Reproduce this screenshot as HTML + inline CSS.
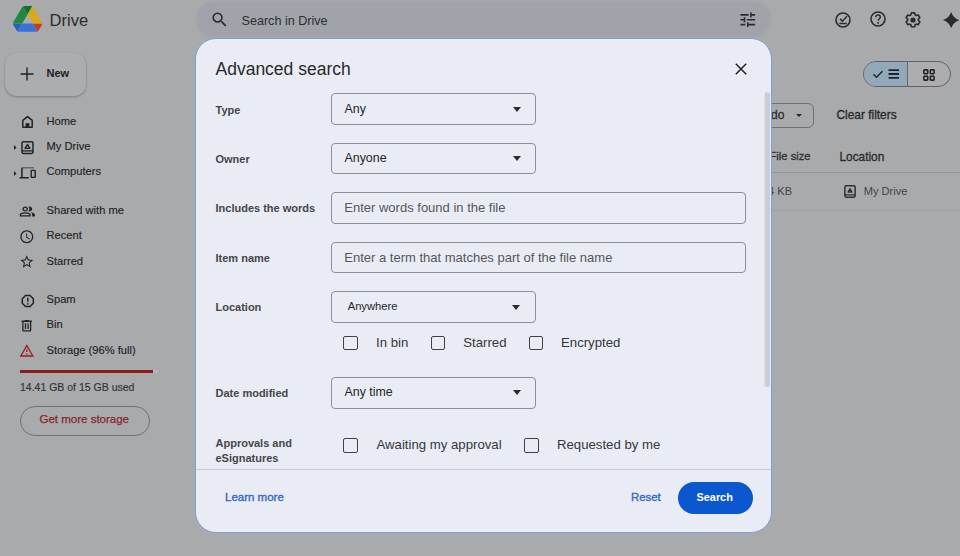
<!DOCTYPE html>
<html><head><meta charset="utf-8">
<style>
*{box-sizing:border-box;margin:0;padding:0}
html,body{width:960px;height:556px;overflow:hidden;background:#a9aaac;font-family:"Liberation Sans",sans-serif;color:#232426}
.a{position:absolute;white-space:nowrap}
.ico{position:absolute}
.side{font-size:11.15px;color:#232426;-webkit-text-stroke:.15px #232426}
#search{left:195.5px;top:1px;width:575px;height:36px;border-radius:18px;background:#a0a3a9;filter:blur(1.2px)}
#dlg{left:195px;top:38.3px;width:577px;height:495.2px;border-radius:21px;background:#e9ecf4;border:1px solid #7d9fd6;overflow:hidden}
.lbl{font-size:11px;font-weight:bold;color:#45464a}
.box{position:absolute;border:1px solid #8c8f94;border-radius:4px}
.val{font-size:12.4px;color:#242527}
.ph{font-size:13px;color:#55575b}
.cb{position:absolute;width:14.5px;height:14.5px;border:1.8px solid #404246;border-radius:2px}
.cbl{font-size:13.2px;color:#36373a}
.arr{position:absolute;width:0;height:0;border-left:4px solid transparent;border-right:4px solid transparent;border-top:5px solid #2a2b2e}
</style></head><body>

<!-- Header -->
<svg class="ico" style="left:12.5px;top:6.2px" width="29.2" height="25.8" viewBox="0 0 87.3 78" preserveAspectRatio="none">
<path d="m6.6 66.85 3.850 6.65c.8 1.4 1.95 2.5 3.3 3.3l13.75-23.8h-27.5c0 1.55.4 3.1 1.2 4.5z" fill="#2c5dbf"/>
<path d="m43.65 25-13.75-23.8c-1.35.8-2.5 1.9-3.3 3.3l-25.4 44a9.06 9.06 0 0 0 -1.2 4.5h27.5z" fill="#1f8a3f"/>
<path d="m73.55 76.8c1.35-.8 2.5-1.9 3.3-3.3l1.6-2.75 7.65-13.250c.8-1.4 1.2-2.95 1.2-4.5h-27.502l5.852 11.5z" fill="#c73a2c"/>
<path d="m43.65 25 13.75-23.8c-1.35-.8-2.9-1.2-4.5-1.2h-18.5c-1.6 0-3.15.45-4.5 1.2z" fill="#176b37"/>
<path d="m59.8 53h-32.3l-13.75 23.8c1.35.8 2.9 1.2 4.5 1.2h50.8c1.6 0 3.15-.45 4.5-1.2z" fill="#3a73d6"/>
<path d="m73.4 26.5-12.7-22c-.8-1.4-1.95-2.5-3.3-3.3l-13.75 23.8 16.15 28h27.45c0-1.55-.4-3.1-1.2-4.5z" fill="#d9a81c"/>
</svg>
<div class="a" style="left:49.5px;top:10.5px;font-size:16.6px;color:#2b2c2e">Drive</div>

<div id="search" class="a"></div>
<svg class="ico" style="left:209.6px;top:9.7px" width="19.2" height="19.2" viewBox="0 0 24 24"><path d="M15.5 14h-.79l-.28-.27A6.471 6.471 0 0 0 16 9.5 6.5 6.5 0 1 0 9.5 16c1.61 0 3.090-.59 4.23-1.57l.27.28v.79l5 4.99L20.49 19l-4.99-5zm-6 0C7.01 14 5 11.99 5 9.5S7.01 5 9.5 5 14 7.010 14 9.5 11.99 14 9.5 14z" fill="#2a2b2e"/></svg>
<div class="a" style="left:241.5px;top:13.8px;font-size:12.6px;color:#2e2f33">Search in Drive</div>
<svg class="ico" style="left:738.2px;top:9.9px" width="19.5" height="19.5" viewBox="0 0 24 24"><path d="M3 17v2h6v-2H3zM3 5v2h10V5H3zm10 16v-2h8v-2h-8v-2h-2v6h2zM7 9v2H3v2h4v2h2V9H7zm14 4v-2H11v2h10zm-6-4h2V7h4V5h-4V3h-2v6z" fill="#2a2b2e"/></svg>

<svg class="ico" style="left:833.1px;top:9.6px" width="20" height="20" viewBox="0 0 20 20"><circle cx="10" cy="10" r="7" fill="none" stroke="#2a2b2e" stroke-width="1.6"/><path d="M6.4 13.5h7.3" stroke="#2a2b2e" stroke-width="1.5"/><path d="M7.1 8.9l2.3 2.3 4.6-4.9" fill="none" stroke="#2a2b2e" stroke-width="1.5"/></svg>
<svg class="ico" style="left:868.3px;top:9.4px" width="20" height="20" viewBox="0 0 20 20"><circle cx="10" cy="10" r="7" fill="none" stroke="#2a2b2e" stroke-width="1.6"/><path d="M7.7 8.2c0-1.4 1-2.3 2.3-2.3s2.3.9 2.3 2.2c0 1.7-2.1 1.7-2.1 3.6" fill="none" stroke="#2a2b2e" stroke-width="1.5"/><circle cx="10.1" cy="13.9" r=".95" fill="#2a2b2e"/></svg>
<svg class="ico" style="left:903.1px;top:9.7px" width="20" height="20" viewBox="0 0 20 20"><path d="M8.3 2.8h3.4l.45 1.9c.5.2.9.45 1.3.75l1.85-.6 1.7 2.95-1.45 1.3c.08.5.08 1 0 1.5l1.45 1.3-1.7 2.95-1.85-.6c-.4.3-.8.55-1.3.75l-.45 1.9H8.3l-.45-1.9c-.5-.2-.9-.45-1.3-.75l-1.85.6L3 14.8l1.45-1.3c-.08-.5-.08-1 0-1.5L3 10.7" fill="none"/><path d="M8.4 2.9h3.2l.5 2c.45.18.85.42 1.2.7l1.95-.6 1.6 2.77-1.5 1.4c.07.45.07.9 0 1.36l1.5 1.4-1.6 2.77-1.95-.6c-.35.28-.75.52-1.2.7l-.5 2H8.4l-.5-2c-.45-.18-.85-.42-1.2-.7l-1.95.6-1.6-2.770 1.5-1.4c-.07-.45-.07-.9 0-1.36l-1.5-1.4 1.6-2.77 1.95.6c.35-.28.75-.52 1.2-.7z" fill="none" stroke="#2a2b2e" stroke-width="1.6" stroke-linejoin="round"/><circle cx="10" cy="10" r="2.6" fill="#2a2b2e"/></svg>
<svg class="ico" style="left:942.8px;top:11.5px" width="16.3" height="16.2" viewBox="0 0 16 16" preserveAspectRatio="none"><path d="M8 0Q10 6 16 8Q10 10 8 16Q6 10 0 8Q6 6 8 0z" fill="#2a2b2e"/></svg>

<!-- Sidebar icons -->
<svg class="ico" style="left:20px;top:114px" width="15" height="15" viewBox="0 0 15 15"><path d="M2.8 13.3V6.4L7.5 2.7l4.7 3.7v6.9z" fill="none" stroke="#222325" stroke-width="1.5" stroke-linejoin="round"/><rect x="5.6" y="9.2" width="3.8" height="4.2" fill="#222325"/></svg>
<svg class="ico" style="left:13.5px;top:145.4px" width="3" height="5" viewBox="0 0 3 5"><path d="M0 0L2.4 2.5 0 5z" fill="#222325"/></svg>
<svg class="ico" style="left:20px;top:140px" width="15" height="15" viewBox="0 0 15 15"><rect x="2" y="1.8" width="11" height="11.6" rx="1.3" fill="none" stroke="#222325" stroke-width="1.5"/><path d="M2 10.9h11" stroke="#222325" stroke-width="1.3"/><path d="M7.5 4.4L9.9 8.4H5.1z" fill="none" stroke="#222325" stroke-width="1.4" stroke-linejoin="round"/></svg>
<svg class="ico" style="left:13.5px;top:171.2px" width="3" height="5" viewBox="0 0 3 5"><path d="M0 0L2.4 2.5 0 5z" fill="#222325"/></svg>
<svg class="ico" style="left:18.5px;top:165.2px" width="18" height="15" viewBox="0 0 18 15"><path d="M15 3.2V2.5H3.2c-.6 0-1 .4-1 1v8.4H.6v1.5H9.8v-1.5H3.7V3.2z" fill="#222325"/><rect x="12.2" y="5.4" width="4" height="7" rx=".6" fill="none" stroke="#222325" stroke-width="1.4"/></svg>
<svg class="ico" style="left:19.1px;top:203.8px" width="16.6" height="15.1" viewBox="0 0 24 24" preserveAspectRatio="none"><path d="M1 20v-2.8q0-.85.438-1.563.437-.712 1.162-1.087 1.550-.775 3.150-1.163Q7.35 13 9 13t3.25.387q1.6.388 3.150 1.163.725.375 1.162 1.087Q17 16.35 17 17.2V20Zm18 0v-3q0-1.100-.612-2.113-.613-1.012-1.738-1.737 1.275.15 2.4.512 1.125.363 2.1.888.9.5 1.375 1.112Q23 16.275 23 17v3ZM9 12q-1.65 0-2.825-1.175Q5 9.65 5 8q0-1.65 1.175-2.825Q7.35 4 9 4q1.65 0 2.825 1.175Q13 6.35 13 8q0 1.65-1.175 2.825Q10.65 12 9 12Zm10-4q0 1.65-1.175 2.825Q16.65 12 15 12q-.275 0-.7-.062-.425-.063-.7-.138.675-.8 1.037-1.775Q15 9.05 15 8q0-1.050-.363-2.025Q14.275 5 13.6 4.2q.35-.125.7-.163Q14.65 4 15 4q1.65 0 2.825 1.175Q19 6.35 19 8ZM3 18h12v-.8q0-.275-.137-.5-.138-.225-.363-.35-1.350-.675-2.725-1.013Q10.4 15 9 15t-2.775.337Q4.85 15.675 3.5 16.35q-.225.125-.362.35Q3 16.925 3 17.2Zm6-8q.825 0 1.413-.588Q11 8.825 11 8t-.587-1.412Q9.825 6 9 6q-.825 0-1.412.588Q7 7.175 7 8t.588 1.412Q8.175 10 9 10Z" fill="#222325"/></svg>
<svg class="ico" style="left:19.2px;top:228.8px" width="15.6" height="15.6" viewBox="0 0 24 24"><path d="M12 2C6.5 2 2 6.5 2 12s4.5 10 10 10 10-4.5 10-10S17.5 2 12 2zm0 18c-4.41 0-8-3.59-8-8s3.59-8 8-8 8 3.59 8 8-3.59 8-8 8zm.5-13H11v6l5.2 3.2.8-1.3-4.5-2.7V7z" fill="#222325"/></svg>
<svg class="ico" style="left:19.4px;top:254.2px" width="15.6" height="15.6" viewBox="0 0 24 24"><path d="M22 9.24l-7.19-.62L12 2 9.19 8.63 2 9.24l5.46 4.73L5.82 21 12 17.27 18.18 21l-1.63-7.030L22 9.24zM12 15.4l-3.76 2.27 1-4.28-3.32-2.88 4.38-.38L12 6.1l1.71 4.04 4.38.38-3.32 2.88 1 4.28L12 15.4z" fill="#222325"/></svg>
<svg class="ico" style="left:19.6px;top:292.8px" width="15.6" height="15.6" viewBox="0 0 24 24"><path d="M8.5 3.8h7l5 5v7l-5 5h-7l-5-5v-7z" fill="none" stroke="#222325" stroke-width="2.3" stroke-linejoin="round"/><path d="M12 7.5v6" stroke="#222325" stroke-width="2.3"/><circle cx="12" cy="16.6" r="1.3" fill="#222325"/></svg>
<svg class="ico" style="left:19.4px;top:318.1px" width="15.5" height="15.5" viewBox="0 0 24 24"><path d="M7 21q-.825 0-1.412-.587Q5 19.825 5 19V6H4V4h5V3h6v1h5v2h-1v13q0 .825-.587 1.413Q17.825 21 17 21ZM17 6H7v13h10ZM9 17h2V8H9Zm4 0h2V8h-2Z" fill="#222325"/></svg>
<svg class="ico" style="left:19.2px;top:343.3px" width="15.6" height="15.6" viewBox="0 0 24 24"><path d="M1 21h22L12 2 1 21zm3.47-2L12 6l7.53 13H4.47zM11 16h2v2h-2zm0-6h2v4h-2z" fill="#9a1f26"/></svg>

<!-- New button -->
<div class="a" style="left:5px;top:52.5px;width:80.5px;height:43px;border-radius:12px;background:#acadaf;box-shadow:0 1px 2.5px rgba(0,0,0,.28)"></div>
<svg class="ico" style="left:20.3px;top:67.2px" width="14" height="14" viewBox="0 0 14 14"><path d="M7 .5v13M.5 7h13" stroke="#222" stroke-width="1.4"/></svg>
<div class="a" style="left:46.5px;top:66.5px;font-size:11px;font-weight:bold;color:#1f2022">New</div>

<!-- Sidebar -->
<div class="a side" style="left:46.5px;top:114.5px">Home</div>
<div class="a side" style="left:46.5px;top:140px">My Drive</div>
<div class="a side" style="left:46.5px;top:165px">Computers</div>
<div class="a side" style="left:46.5px;top:203.5px">Shared with me</div>
<div class="a side" style="left:46.5px;top:229px">Recent</div>
<div class="a side" style="left:46.5px;top:254.5px">Starred</div>
<div class="a side" style="left:46.5px;top:292.5px">Spam</div>
<div class="a side" style="left:46.5px;top:318px">Bin</div>
<div class="a side" style="left:46.5px;top:343.5px">Storage (96% full)</div>
<div class="a" style="left:19.5px;top:369.6px;width:133px;height:3.2px;background:#8e1a20"></div>
<div class="a" style="left:152.5px;top:369.6px;width:5.5px;height:3.2px;background:#b5b6b8"></div>
<div class="a side" style="left:20px;top:381px;font-size:10.5px;color:#37383b">14.41 GB of 15 GB used</div>
<div class="a" style="left:19.5px;top:405.5px;width:130.5px;height:30px;border-radius:15px;border:1px solid #6e7074"></div>
<div class="a" style="left:39.5px;top:413px;font-size:11.5px;color:#86272c;-webkit-text-stroke:.25px #86272c">Get more storage</div>

<!-- Right background -->
<div class="a" style="left:863px;top:61px;width:88px;height:25.5px;border-radius:13px;border:1.2px solid #606266;overflow:hidden;background:#adadaf">
 <div style="position:absolute;left:0;top:0;width:44px;height:100%;background:#93a8b8;border-right:1px solid #66686c"></div>
</div>
<svg class="ico" style="left:871.5px;top:68px" width="30" height="12" viewBox="0 0 30 12"><path d="M1.5 6.2l3 3 6-6" fill="none" stroke="#1e2a36" stroke-width="1.5"/><path d="M16.5 2.1h10.5M16.5 6h10.5M16.5 9.9h10.5" stroke="#1b2530" stroke-width="1.8"/></svg>
<svg class="ico" style="left:922.5px;top:68.5px" width="12" height="12" viewBox="0 0 12 12"><rect x=".9" y=".9" width="3.8" height="3.8" rx=".6" fill="none" stroke="#222325" stroke-width="1.6"/><rect x="7.3" y=".9" width="3.8" height="3.8" rx=".6" fill="none" stroke="#222325" stroke-width="1.6"/><rect x=".9" y="7.3" width="3.8" height="3.8" rx=".6" fill="none" stroke="#222325" stroke-width="1.6"/><rect x="7.3" y="7.3" width="3.8" height="3.8" rx=".6" fill="none" stroke="#222325" stroke-width="1.6"/></svg>
<div class="a" style="left:740px;top:103px;width:74px;height:24.5px;border-radius:6px;border:1px solid #6e7074"></div>
<div class="a" style="left:771px;top:108px;font-size:12px;color:#2e2f31;-webkit-text-stroke:.3px #2e2f31">do</div>
<div class="arr" style="left:796px;top:113.5px;border-width:3px 3px 0 3px;border-top-width:3px"></div>
<div class="a" style="left:836.5px;top:108px;font-size:11.9px;color:#27282a;-webkit-text-stroke:.3px #27282a">Clear filters</div>
<div class="a" style="left:769.5px;top:150px;font-size:11.2px;color:#2e2f31;-webkit-text-stroke:.3px #2e2f31">File size</div>
<div class="a" style="left:839.5px;top:150px;font-size:11.85px;color:#2a2b2d;-webkit-text-stroke:.3px #2a2b2d">Location</div>
<div class="a" style="left:771px;top:172px;width:189px;height:1px;background:#96979a"></div>
<div class="a" style="left:768px;top:184.5px;font-size:11.1px;color:#434447">4 KB</div>
<div class="a" style="left:863.7px;top:184.5px;font-size:11.1px;color:#434447">My Drive</div>
<svg class="ico" style="left:844.4px;top:184.6px" width="12" height="13" viewBox="0 0 12 13"><rect x=".85" y=".85" width="10.3" height="11.3" rx="1.3" fill="none" stroke="#303134" stroke-width="1.5"/><path d="M.8 9.9h10.4" stroke="#303134" stroke-width="1.3"/><path d="M6 3.9L7.9 7.1H4.1z" fill="none" stroke="#303134" stroke-width="1.5" stroke-linejoin="round"/></svg>
<div class="a" style="left:771px;top:210px;width:189px;height:1px;background:#a0a1a4"></div>

<!-- Dialog -->
<div id="dlg" class="a">
</div>
<div class="a" style="left:215.5px;top:59px;font-size:17.5px;color:#28292c">Advanced search</div>
<svg class="ico" style="left:734px;top:62.2px" width="14" height="14" viewBox="0 0 14 14"><path d="M1.8 1.8l10.4 10.4M12.2 1.8l-10.4 10.4" stroke="#1f2023" stroke-width="1.5"/></svg>
<div class="a" style="left:764.3px;top:92px;width:5.8px;height:294.5px;border-radius:3px 3px 3px 3px;background:#cbcdd2;border-left:1px solid #dfe1e6"></div>

<div class="a lbl" style="left:215.5px;top:104px">Type</div>
<div class="a lbl" style="left:215.5px;top:153px">Owner</div>
<div class="a lbl" style="left:215.5px;top:202px">Includes the words</div>
<div class="a lbl" style="left:215.5px;top:251.5px">Item name</div>
<div class="a lbl" style="left:215.5px;top:301px">Location</div>
<div class="a lbl" style="left:215.5px;top:386.5px">Date modified</div>
<div class="a lbl" style="left:215.5px;top:435.6px;line-height:15.4px">Approvals and<br>eSignatures</div>

<div class="box" style="left:331px;top:93px;width:204.5px;height:31.5px"></div>
<div class="a val" style="left:344.5px;top:101.5px">Any</div>
<div class="arr" style="left:512.5px;top:106.5px"></div>

<div class="box" style="left:331px;top:142.5px;width:204.5px;height:31.5px"></div>
<div class="a val" style="left:344.5px;top:151px">Anyone</div>
<div class="arr" style="left:512.5px;top:156px"></div>

<div class="box" style="left:331px;top:192px;width:414.5px;height:31.5px"></div>
<div class="a ph" style="left:344.3px;top:200px">Enter words found in the file</div>

<div class="box" style="left:331px;top:241.5px;width:414.5px;height:31.5px"></div>
<div class="a ph" style="left:344.3px;top:249.5px">Enter a term that matches part of the file name</div>

<div class="box" style="left:331px;top:290.5px;width:204.5px;height:32.5px"></div>
<div class="a" style="left:347.7px;top:300px;font-size:11.2px;color:#242527">Anywhere</div>
<div class="arr" style="left:511.5px;top:305px"></div>

<div class="cb" style="left:343.3px;top:335.7px"></div>
<div class="a cbl" style="left:376px;top:335px">In bin</div>
<div class="cb" style="left:430.7px;top:335.7px"></div>
<div class="a cbl" style="left:463.3px;top:335px">Starred</div>
<div class="cb" style="left:528.5px;top:335.7px"></div>
<div class="a cbl" style="left:561px;top:335px">Encrypted</div>

<div class="box" style="left:331px;top:377px;width:204.5px;height:31.5px"></div>
<div class="a val" style="left:344.5px;top:385px">Any time</div>
<div class="arr" style="left:512.5px;top:390px"></div>

<div class="cb" style="left:343px;top:438px"></div>
<div class="a cbl" style="left:376.5px;top:437px">Awaiting my approval</div>
<div class="cb" style="left:524px;top:438px"></div>
<div class="a cbl" style="left:557px;top:437px">Requested by me</div>

<div class="a" style="left:196px;top:469px;width:575px;height:1px;background:#c9ccd2"></div>

<div class="a" style="left:225px;top:491px;font-size:11.5px;color:#3267c6;-webkit-text-stroke:.35px #3267c6">Learn more</div>
<div class="a" style="left:631px;top:491px;font-size:11.4px;color:#3267c6;-webkit-text-stroke:.35px #3267c6">Reset</div>
<div class="a" style="left:677.5px;top:482px;width:75px;height:32px;border-radius:16px;background:#0b57d0"></div>
<div class="a" style="left:696.5px;top:491px;font-size:10.9px;font-weight:bold;color:#fff">Search</div>

</body></html>
